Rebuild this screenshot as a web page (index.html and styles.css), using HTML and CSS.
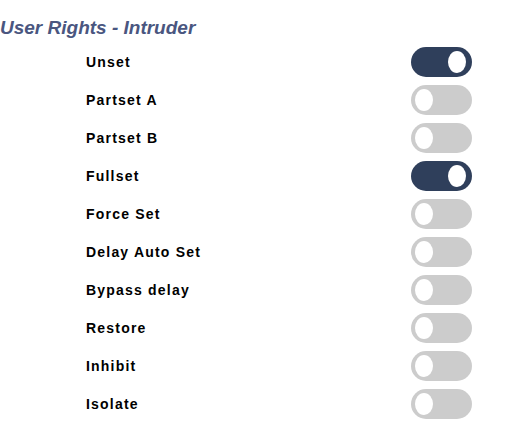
FILE: index.html
```html
<!DOCTYPE html>
<html lang="en">
<head>
    <meta charset="UTF-8">
    <title>User Rights - Intruder</title>
    <link rel="stylesheet" href="styles.css">
</head>
<body>
    <h2 class="title">User Rights - Intruder</h2>
    <div class="rights">
        <div class="row"><span class="label">Unset</span><span class="toggle on"><i></i></span></div>
        <div class="row"><span class="label">Partset A</span><span class="toggle"><i></i></span></div>
        <div class="row"><span class="label">Partset B</span><span class="toggle"><i></i></span></div>
        <div class="row"><span class="label">Fullset</span><span class="toggle on"><i></i></span></div>
        <div class="row"><span class="label">Force Set</span><span class="toggle"><i></i></span></div>
        <div class="row"><span class="label">Delay Auto Set</span><span class="toggle"><i></i></span></div>
        <div class="row"><span class="label">Bypass delay</span><span class="toggle"><i></i></span></div>
        <div class="row"><span class="label">Restore</span><span class="toggle"><i></i></span></div>
        <div class="row"><span class="label">Inhibit</span><span class="toggle"><i></i></span></div>
        <div class="row"><span class="label">Isolate</span><span class="toggle"><i></i></span></div>
    </div>
</body>
</html>
```

FILE: styles.css
```css
body {
    margin: 0;
    background-color: #fff;
    font-family: 'Liberation Sans', Arial, sans-serif;
}
.title {
    margin: 0;
    padding-top: 17px;
    font-size: 19px;
    font-style: italic;
    font-weight: bold;
    line-height: 21px;
    color: #4a5680;
}
.rights {
    display: flex;
    flex-direction: column;
    width: 386px;
    margin-left: 86px;
    margin-top: 5px;
}
.row {
    display: flex;
    align-items: center;
    justify-content: space-between;
    height: 38px;
}
.label {
    font-size: 14px;
    font-weight: bold;
    letter-spacing: 1.2px;
    color: #000;
}
.toggle {
    display: flex;
    align-items: center;
    width: 61px;
    height: 30px;
    padding: 0 4px;
    box-sizing: border-box;
    border-radius: 15px;
    background-color: #ccc;
}
.toggle i {
    width: 18px;
    height: 22px;
    border-radius: 50%;
    background-color: #fff;
}
.toggle.on {
    justify-content: flex-end;
    padding-right: 6px;
    background-color: #2f3f5b;
}
```
